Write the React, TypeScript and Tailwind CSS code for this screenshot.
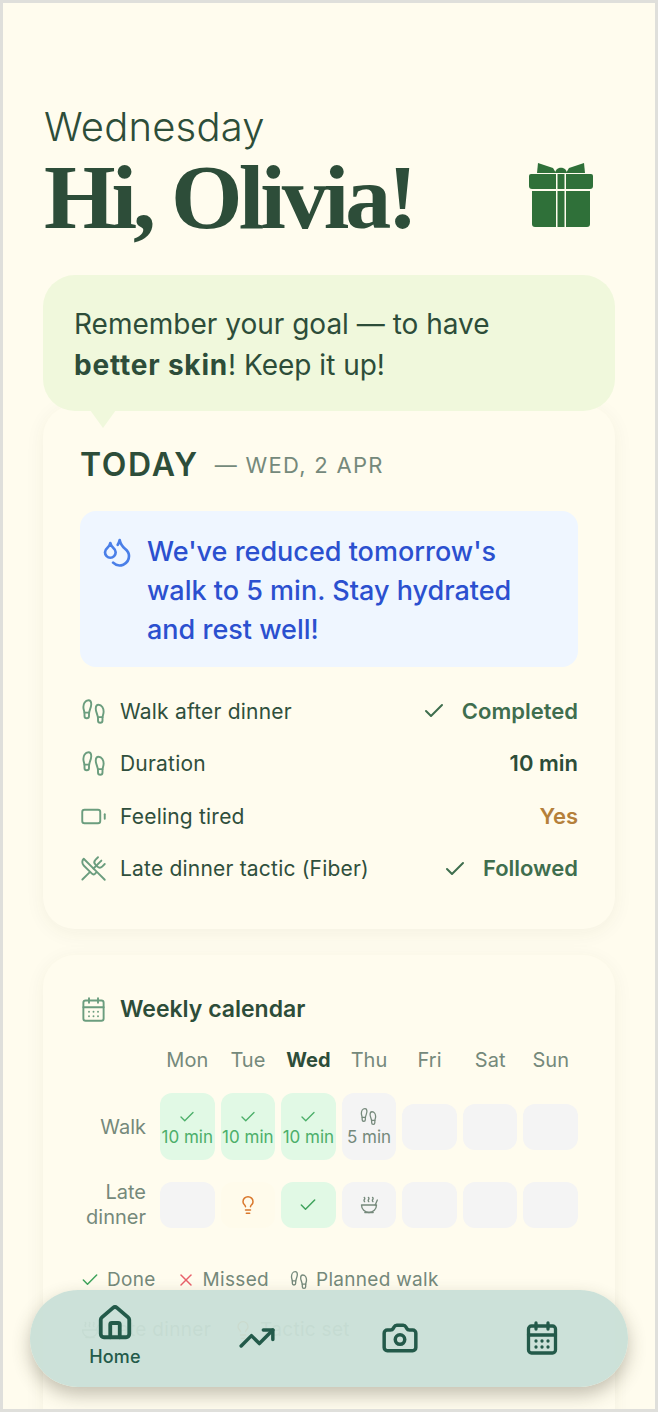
import { Battery, CalendarDays, Camera, Check, Droplets, Footprints, House, Lightbulb, Soup, TrendingUp, UtensilsCrossed, X } from "lucide-react";
import type { ReactNode } from "react";

const days = ["Mon", "Tue", "Wed", "Thu", "Fri", "Sat", "Sun"];

function Row({ icon, label, children }: { icon: ReactNode; label: string; children: ReactNode }) {
  return (
    <div className="flex h-[52.5px] items-center justify-between">
      <div className="flex items-center gap-[13px] text-[21px] tracking-[0.2px] text-[#2f4f3c]">
        {icon}
        <span>{label}</span>
      </div>
      {children}
    </div>
  );
}

function DoneCell() {
  return (
    <div className="flex h-[67px] flex-col items-center justify-center rounded-xl bg-[#e1f9e5] pt-[3px] text-[#4caf6a]">
      <Check size={18} strokeWidth={1.8} />
      <span className="text-[17px] leading-[23px] whitespace-nowrap">10 min</span>
    </div>
  );
}

function EmptyCell() {
  return <div className="h-[46px] rounded-xl bg-[#f4f4f4]" />;
}

export default function App() {
  return (
    <div className="relative h-[1412px] w-[658px] overflow-hidden border-[3px] border-[#dfdfdb] bg-[#fffcee] font-['Inter',sans-serif]">
      <div className="px-[40px] pt-[99px]">
        {/* header */}
        <div className="flex items-start justify-between">
          <div>
            <div className="ml-[1px] text-[40px] leading-[50px] font-light tracking-[0.2px] text-[#2d4d39]">Wednesday</div>
            <h1 className="ml-[1px] font-['Liberation_Serif',serif] text-[92px] leading-[90px] font-bold tracking-[-4px] text-[#2d4d39]">
              Hi, Olivia!
            </h1>
          </div>
          <svg viewBox="0 0 64 65" className="mt-[61px] mr-[22px] h-[65px] w-[64px]" fill="#2f7039">
            <path d="M9 0 L24 5 L27 10 H8 Z" />
            <path d="M55 0 L40 5 L37 10 H56 Z" />
            <path d="M26 10 C27 3 37 3 38 10 Z" />
            <path d="M2 11 H27 V26 H3 Q0 26 0 23 V13 Q0 11 2 11 Z" />
            <rect x="28.5" y="11" width="7" height="15" />
            <path d="M37 11 H62 Q64 11 64 13 V23 Q64 26 61 26 H37 Z" />
            <path d="M3 28 H27 V64 H6 Q3 64 3 61 Z" />
            <rect x="28.5" y="28" width="7" height="36" />
            <path d="M37 28 H61 V61 Q61 64 58 64 H37 Z" />
          </svg>
        </div>

        {/* goal bubble */}
        <div className="relative z-10 mt-[33px] h-[136px] rounded-[32px] bg-[#f0f8dc] px-[31px] pt-[29px] text-[28px] leading-[41px] text-[#2d4d39]">
          Remember your goal — to have
          <br />
          <span className="font-bold tracking-[0.8px]">better skin</span>! Keep it up!
          <div className="absolute top-[135px] left-[47px] h-0 w-0 border-x-[13px] border-t-[18px] border-x-transparent border-t-[#f0f8dc]" />
        </div>

        {/* today card */}
        <div className="-mt-[6px] h-[524px] rounded-[32px] bg-[#fffcee] px-[37px] pt-[37px] shadow-[0_4px_20px_rgba(60,60,40,0.06)]">
          <div className="flex items-center gap-[16px]">
            <span className="text-[32px] leading-[46px] font-semibold tracking-[1.7px] text-[#2d4d39]">TODAY</span>
            <span className="text-[22px] tracking-[1.3px] text-[#75897b]">— WED, 2 APR</span>
          </div>
          <div className="mt-[23px] flex h-[156px] gap-[14px] rounded-2xl bg-[#eff6ff] px-[21px] pt-[21px]">
            <Droplets size={32} strokeWidth={2} className="mt-[4px] shrink-0 text-[#4a7fe8]" />
            <p className="text-[27px] leading-[39px] font-medium whitespace-nowrap text-[#2b50cf]">
              We've reduced tomorrow's
              <br />
              walk to 5 min. Stay hydrated
              <br />
              and rest well!
            </p>
          </div>
          <div className="mt-[18px]">
            <Row icon={<Footprints size={27} strokeWidth={1.7} className="text-[#6b9d7e]" />} label="Walk after dinner">
              <span className="flex items-center gap-[16px] text-[22px] font-semibold text-[#3f6e4e]">
                <Check size={24} strokeWidth={2} />
                Completed
              </span>
            </Row>
            <Row icon={<Footprints size={27} strokeWidth={1.7} className="text-[#6b9d7e]" />} label="Duration">
              <span className="text-[22px] font-semibold text-[#2d4d39]">10 min</span>
            </Row>
            <Row icon={<Battery size={27} strokeWidth={1.7} className="text-[#6b9d7e]" />} label="Feeling tired">
              <span className="text-[22px] font-semibold text-[#b5803a]">Yes</span>
            </Row>
            <Row icon={<UtensilsCrossed size={27} strokeWidth={1.7} className="text-[#6b9d7e]" />} label="Late dinner tactic (Fiber)">
              <span className="flex items-center gap-[16px] text-[22px] font-semibold text-[#3f6e4e]">
                <Check size={24} strokeWidth={2} />
                Followed
              </span>
            </Row>
          </div>
        </div>

        {/* weekly card */}
        <div className="mt-[26px] h-[500px] rounded-[32px] bg-[#fffcee] px-[37px] pt-[36px] shadow-[0_4px_20px_rgba(60,60,40,0.06)]">
          <div className="flex items-center gap-[13px]">
            <CalendarDays size={27} strokeWidth={1.7} className="text-[#6b9d7e]" />
            <span className="text-[23px] leading-[36px] font-semibold text-[#2d4d39]">Weekly calendar</span>
          </div>
          <div className="mt-[19px] ml-[80px] grid grid-cols-7 gap-x-[6px] text-center text-[20px] leading-[28px] text-[#75897b]">
            {days.map((d) => (
              <span key={d} className={d === "Wed" ? "font-bold text-[#2d4d39]" : ""}>
                {d}
              </span>
            ))}
          </div>
          <div className="mt-[19px] flex items-center">
            <span className="w-[66px] text-right text-[20px] text-[#75897b]">Walk</span>
            <div className="ml-[14px] grid flex-1 grid-cols-7 items-center gap-x-[6px]">
              <DoneCell />
              <DoneCell />
              <DoneCell />
              <div className="flex h-[67px] flex-col items-center justify-center rounded-xl bg-[#f4f4f4] pt-[3px] text-[#75897b]">
                <Footprints size={19} strokeWidth={1.6} />
                <span className="text-[17px] leading-[23px]">5 min</span>
              </div>
              <EmptyCell />
              <EmptyCell />
              <EmptyCell />
            </div>
          </div>
          <div className="mt-[20px] flex items-center">
            <span className="w-[66px] text-right text-[20px] leading-[25px] text-[#75897b]">
              Late dinner
            </span>
            <div className="ml-[14px] grid flex-1 grid-cols-7 items-center gap-x-[6px]">
              <EmptyCell />
              <div className="flex h-[46px] items-center justify-center rounded-xl bg-[#fffbeb] text-[#d9772b]">
                <Lightbulb size={20} strokeWidth={1.8} />
              </div>
              <div className="flex h-[46px] items-center justify-center rounded-xl bg-[#e1f9e5] text-[#3fa35c]">
                <Check size={20} strokeWidth={1.8} />
              </div>
              <div className="flex h-[46px] items-center justify-center rounded-xl bg-[#f4f4f4] text-[#75897b]">
                <Soup size={20} strokeWidth={1.6} />
              </div>
              <EmptyCell />
              <EmptyCell />
              <EmptyCell />
            </div>
          </div>
          <div className="mt-[36px] flex items-center gap-[20px] text-[19px] leading-[28px] tracking-[0.3px] text-[#75897b]">
            <span className="flex items-center gap-[7px]">
              <Check size={20} strokeWidth={1.8} className="text-[#3fa35c]" />
              Done
            </span>
            <span className="flex items-center gap-[7px]">
              <X size={20} strokeWidth={1.8} className="text-[#e8606a]" />
              Missed
            </span>
            <span className="flex items-center gap-[7px]">
              <Footprints size={20} strokeWidth={1.6} />
              Planned walk
            </span>
          </div>
          <div className="mt-[22px] flex items-center gap-[22px] text-[19px] leading-[28px] tracking-[0.3px] text-[#75897b]">
            <span className="flex items-center gap-[7px]">
              <Soup size={20} strokeWidth={1.6} />
              Late dinner
            </span>
            <span className="flex items-center gap-[7px]">
              <Lightbulb size={20} strokeWidth={1.6} className="text-[#d9772b]" />
              Tactic set
            </span>
          </div>
        </div>
      </div>

      {/* bottom nav */}
      <nav className="absolute top-[1287px] left-[27px] flex h-[97px] w-[598px] items-start rounded-[48px] bg-[#c9dfd7]/95 text-[#235a4a] shadow-[0_8px_18px_rgba(60,55,35,0.3)]">
        <div className="ml-[43px] flex w-[84px] flex-col items-center pt-[14px]">
          <House size={38} strokeWidth={2.4} />
          <span className="mt-[3px] text-[18px] leading-[24px] font-medium tracking-[0.2px]">Home</span>
        </div>
        <TrendingUp size={38} strokeWidth={2.2} className="mt-[29px] ml-[81px]" />
        <Camera size={38} strokeWidth={2.2} className="mt-[29px] ml-[105px]" />
        <CalendarDays size={36} strokeWidth={2.2} className="mt-[30px] ml-[105px]" />
      </nav>
    </div>
  );
}
